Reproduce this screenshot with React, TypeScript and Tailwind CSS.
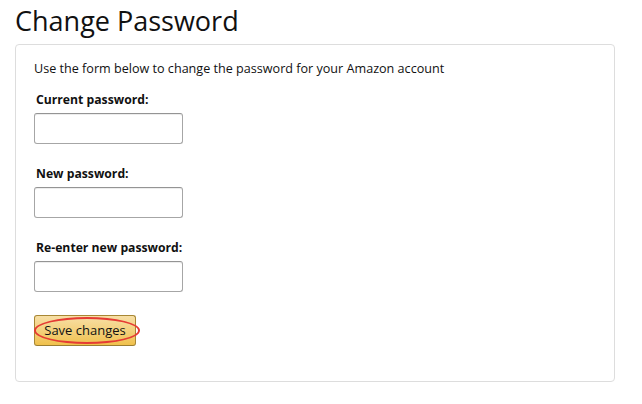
import React from 'react';

const fields = ['Current password:', 'New password:', 'Re-enter new password:'];

export default function App() {
    return (
        <div className="w-[642px] h-[404px] bg-white text-[#111] font-['Open_Sans',sans-serif]">
            <h1 className="pl-[15px] pt-[3px] text-[27px] leading-[36px] font-normal">Change Password</h1>
            <div className="ml-[15px] mt-[5px] h-[338px] w-[600px] rounded-[4px] border border-[#ddd] pl-[18px] pt-[14px]">
                <p className="text-[12.6px] leading-[19px]">
                    Use the form below to change the password for your Amazon account
                </p>
                <div className="mt-[12px] flex flex-col gap-[20px]">
                    {fields.map((label) => (
                        <div key={label}>
                            <label className="block pl-[2px] text-[12.2px] font-bold leading-[19px]">{label}</label>
                            <input
                                type="password"
                                className="mt-[4px] block h-[31px] w-[149px] rounded-[3px] border border-[#a6a6a6] border-t-[#949494] bg-white shadow-[inset_0_1px_0_rgba(0,0,0,.07)] outline-none"
                            />
                        </div>
                    ))}
                </div>
                <div className="relative mt-[23px] w-fit">
                    <button className="block h-[31px] w-[102px] rounded-[3px] border border-[#a88734] border-b-[#9c7e31] bg-gradient-to-b from-[#f7dfa5] to-[#f0c14b] text-[13px] text-[#111]">
                        Save changes
                    </button>
                    <div className="pointer-events-none absolute left-0 top-[2px] h-[27px] w-[106px] rounded-[50%] border-[2.5px] border-[#e53b34]" />
                </div>
            </div>
        </div>
    );
}
